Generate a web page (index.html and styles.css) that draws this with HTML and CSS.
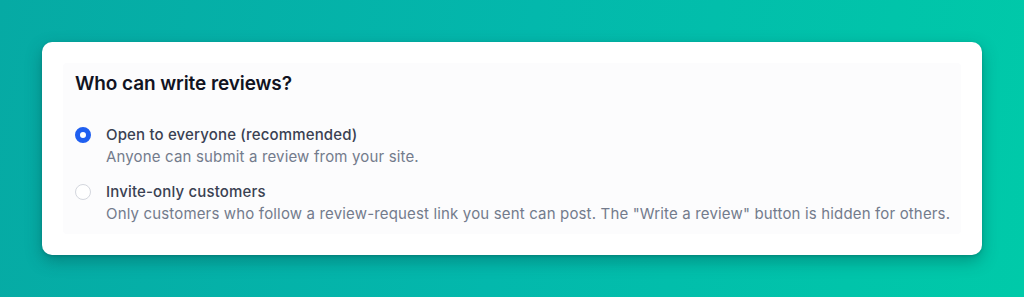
FILE: index.html
```html
<!DOCTYPE html>
<html lang="en">
<head>
<meta charset="utf-8">
<link rel="stylesheet" href="styles.css">
</head>
<body>
<div class="page">
  <section class="card">
    <div class="panel">
      <h2 class="title">Who can write reviews?</h2>
      <div class="options">
        <label class="option">
          <span class="radio radio--checked"></span>
          <span class="text">
            <span class="label">Open to everyone (recommended)</span>
            <span class="desc">Anyone can submit a review from your site.</span>
          </span>
        </label>
        <label class="option">
          <span class="radio"></span>
          <span class="text">
            <span class="label">Invite-only customers</span>
            <span class="desc">Only customers who follow a review-request link you sent can post. The "Write a review" button is hidden for others.</span>
          </span>
        </label>
      </div>
    </div>
  </section>
</div>
</body>
</html>
```

FILE: styles.css
```css
* { box-sizing: border-box; }
html, body { margin: 0; height: 100%; }
body {
  font-family: Inter, "Noto Sans", sans-serif;
  background: linear-gradient(100deg, #06aaa4 0%, #03b8ac 50%, #00caa9 100%);
  overflow: hidden;
}
.page {
  padding: 42px;
}
.card {
  background: #ffffff;
  border-radius: 10px;
  padding: 21px;
  height: 213px;
  box-shadow: 0 6px 16px rgba(0, 60, 60, 0.35), 0 1px 3px rgba(0, 40, 40, 0.2);
}
.panel {
  background: #fcfcfd;
  border-radius: 4px;
  padding: 7px 4px 9px 12px;
  height: 171px;
}
.title {
  margin: 0;
  font-size: 19px;
  line-height: 28px;
  font-weight: 600;
  color: #111322;
  letter-spacing: -0.09px;
}
.options {
  margin-top: 26px;
  display: flex;
  flex-direction: column;
  gap: 13px;
}
.option {
  display: flex;
  align-items: flex-start;
  gap: 15px;
}
.radio {
  flex: none;
  width: 16px;
  height: 16px;
  margin-top: 3px;
  border-radius: 50%;
  border: 1px solid #d4d7de;
  background: #fff;
}
.radio--checked {
  border: 5px solid #1f5ff0;
  background: #fff;
}
.text {
  display: flex;
  flex-direction: column;
}
.label {
  font-size: 15px;
  line-height: 22px;
  font-weight: 500;
  color: #3a4152;
  letter-spacing: 0.16px;
}
.desc {
  font-size: 15px;
  line-height: 22px;
  color: #737b8c;
  letter-spacing: 0.16px;
}
```
